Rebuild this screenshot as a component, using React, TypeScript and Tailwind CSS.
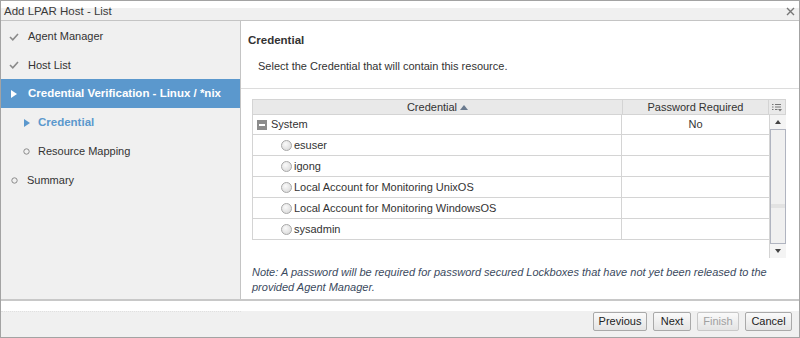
import React from "react";

const font = { fontFamily: '"Liberation Sans", Arial, sans-serif' };

function Check() {
  return (
    <svg width="10" height="8" viewBox="0 0 10 8" className="shrink-0">
      <path d="M1 4 L3.8 6.8 L9 1" stroke="#8a8a8a" strokeWidth="1.6" fill="none" />
    </svg>
  );
}

function Tri({ color }: { color: string }) {
  return (
    <svg width="6" height="8" viewBox="0 0 6 8" className="shrink-0">
      <path d="M0 0 L6 4 L0 8 Z" fill={color} />
    </svg>
  );
}

function Circ() {
  return (
    <svg width="7" height="7" viewBox="0 0 7 7" className="shrink-0">
      <circle cx="3.5" cy="3.5" r="2.7" stroke="#8a8a8a" strokeWidth="1" fill="none" />
    </svg>
  );
}

function Radio() {
  return (
    <span className="inline-block w-[11px] h-[11px] rounded-full border border-[#a8a8a8] bg-[radial-gradient(circle_at_40%_35%,#fafafa,#d4d4d4)] shrink-0" />
  );
}

const rows = [
  "esuser",
  "igong",
  "Local Account for Monitoring UnixOS",
  "Local Account for Monitoring WindowsOS",
  "sysadmin",
];

export default function App() {
  return (
    <div
      style={font}
      className="w-[800px] h-[338px] border border-[#a3a3a3] flex flex-col text-[11px] text-[#333] bg-white overflow-hidden"
    >
      {/* Title bar */}
      <div className="h-[20px] shrink-0 flex items-center justify-between pl-[3px] pr-[4px] bg-[linear-gradient(to_bottom,#ffffff_7px,#f0f0f0_7px)] border-b border-[#c4c4c4]">
        <span className="text-[11.5px] text-[#3a3a3a] leading-none pt-[2px]">Add LPAR Host - List</span>
        <svg width="9" height="9" viewBox="0 0 9 9" className="mt-[2px]">
          <path d="M1 1 L8 8 M8 1 L1 8" stroke="#777" strokeWidth="1.4" />
        </svg>
      </div>

      {/* Main */}
      <div className="flex flex-1 min-h-0">
        {/* Sidebar */}
        <div className="w-[240px] shrink-0 bg-[#f0f0f0] border-r border-[#c4c4c4] flex flex-col pt-[1px]">
          <div className="h-[29px] flex items-center gap-[9px] pl-[8px]">
            <Check />
            <span>Agent Manager</span>
          </div>
          <div className="h-[28px] flex items-center gap-[9px] pl-[8px]">
            <Check />
            <span>Host List</span>
          </div>
          <div className="h-[29px] flex items-center gap-[11px] pl-[10px] bg-[#5b98cd] text-white font-bold text-[11.5px]">
            <Tri color="#ffffff" />
            <span>Credential Verification - Linux / *nix</span>
          </div>
          <div className="h-[29px] flex items-center gap-[8px] pl-[23px] text-[#5b98cd] font-bold text-[11.5px]">
            <Tri color="#5b98cd" />
            <span>Credential</span>
          </div>
          <div className="h-[29px] flex items-center gap-[8px] pl-[22px]">
            <Circ />
            <span>Resource Mapping</span>
          </div>
          <div className="h-[29px] flex items-center gap-[9px] pl-[10px]">
            <Circ />
            <span>Summary</span>
          </div>
        </div>

        {/* Content */}
        <div className="flex-1 flex flex-col min-w-0">
          <div className="h-[68px] shrink-0 border-b border-[#dcdcdc] pl-[7px] pt-[11px]">
            <div className="font-bold text-[#333] text-[11.5px]">Credential</div>
            <div className="mt-[9px] pl-[10px] text-[#333]">Select the Credential that will contain this resource.</div>
          </div>

          <div className="pl-[11px] pr-[13px] pt-[10px]">
            <div className="flex flex-col">
              {/* header */}
              <div className="flex h-[16px] bg-[#e9e9e9] border border-[#d4d4d4] text-[#333]">
                <div className="w-[370px] flex items-center justify-center gap-[3px] border-r border-[#d4d4d4]">
                  <span>Credential</span>
                  <svg width="8" height="5" viewBox="0 0 8 5"><path d="M0 5 L4 0 L8 5 Z" fill="#6b7b8f" /></svg>
                </div>
                <div className="w-[146px] flex items-center justify-center border-r border-[#d4d4d4]">Password Required</div>
                <div className="flex-1 flex items-center justify-center">
                  <svg width="10" height="9" viewBox="0 0 10 9">
                    <path d="M0 1.5h1.5M3 1.5h6M0 4h1.5M3 4h6M0 6.5h1.5M3 6.5h2.5" stroke="#777" strokeWidth="1" />
                    <path d="M6 6 L10 6 L8 8.5 Z" fill="#777" />
                  </svg>
                </div>
              </div>
              {/* body */}
              <div className="flex h-[143px]">
                <div className="w-[517px] flex flex-col">
                  <div className="flex h-[20px] border-l border-b border-[#d4d4d4]">
                    <div className="w-[369px] flex items-center gap-[4px] pl-[4px] border-r border-[#d4d4d4]">
                      <span className="w-[10px] h-[10px] bg-[#8c8c8c] flex items-center justify-center">
                        <span className="w-[6px] h-[2px] bg-white" />
                      </span>
                      <span>System</span>
                    </div>
                    <div className="flex-1 flex items-center justify-center">No</div>
                  </div>
                  {rows.map((r) => (
                    <div key={r} className="flex h-[21px] border-l border-b border-[#d4d4d4]">
                      <div className="w-[369px] flex items-center gap-[2px] pl-[28px] border-r border-[#d4d4d4]">
                        <Radio />
                        <span>{r}</span>
                      </div>
                      <div className="flex-1" />
                    </div>
                  ))}
                </div>
                {/* scrollbar */}
                <div className="flex-1 flex flex-col bg-[#f4f4f4] border-l border-[#d4d4d4]">
                  <div className="h-[14px] flex items-center justify-center">
                    <svg width="6" height="4" viewBox="0 0 6 4"><path d="M0 4 L3 0 L6 4 Z" fill="#444" /></svg>
                  </div>
                  <div className="flex-1 border border-[#b0b4c0] bg-[#f0f0f0] flex flex-col pt-[74px]">
                    <div className="h-[4px] bg-[#e2e2e2]" />
                  </div>
                  <div className="h-[14px] flex items-center justify-center">
                    <svg width="6" height="4" viewBox="0 0 6 4"><path d="M0 0 L6 0 L3 4 Z" fill="#444" /></svg>
                  </div>
                </div>
              </div>
            </div>
            <div className="mt-[7px] italic text-[#3b4a5e] leading-[15px] -mr-[6px]">
              Note: A password will be required for password secured Lockboxes that have not yet been released to the provided Agent Manager.
            </div>
          </div>
        </div>
      </div>

      {/* Footer */}
      <div className="h-[38px] shrink-0 border-t-2 border-[#c8c8c8] flex flex-col">
        <div className="h-[10px] bg-white" />
        <div className="flex-1 bg-[#f0f0f0] flex justify-end items-start gap-[6px] pr-[7px] pt-[1px] relative">
          <div className="absolute left-0 top-0 w-[240px] border-t border-dotted border-[#e0e0e0]" />
          {[
            { t: "Previous", w: "w-[54px]", d: false },
            { t: "Next", w: "w-[38px]", d: false },
            { t: "Finish", w: "w-[42px]", d: true },
            { t: "Cancel", w: "w-[47px]", d: false },
          ].map((b) => (
            <div
              key={b.t}
              className={`${b.w} h-[19px] flex items-center justify-center border border-[#a9a9a9] rounded-[2px] bg-[linear-gradient(to_bottom,#fafafa,#e4e4e4)] ${b.d ? "text-[#a0a0a0] border-[#c8c8c8]" : "text-[#222]"}`}
            >
              {b.t}
            </div>
          ))}
        </div>
      </div>
    </div>
  );
}
